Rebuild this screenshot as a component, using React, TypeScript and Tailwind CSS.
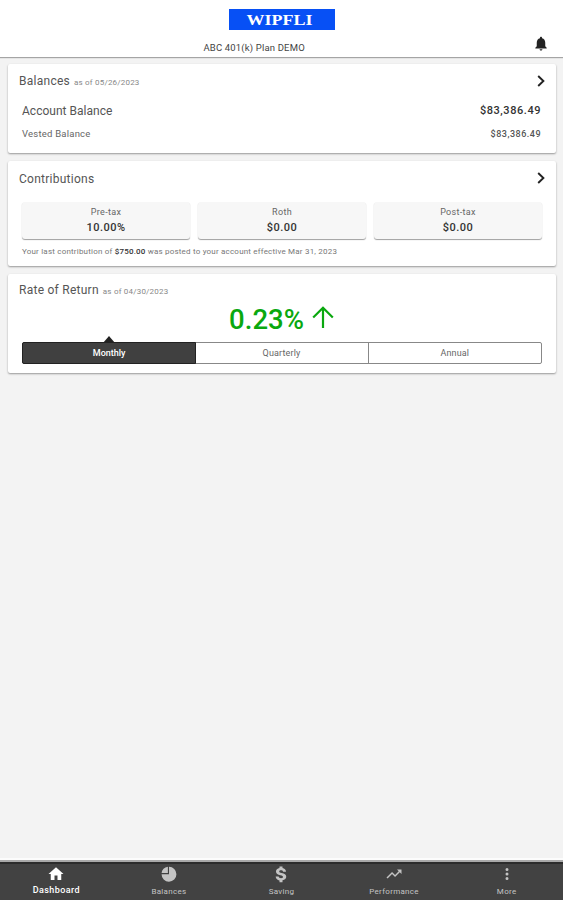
import type { ReactNode } from "react";

const card = "mx-2 mr-[7px] rounded-[2px] bg-white shadow-[0_1px_2px_rgba(0,0,0,0.38)]";

function Chevron() {
  return (
    <svg className="h-3 w-2" viewBox="0 0 8 12" fill="none" stroke="#222" strokeWidth="1.9">
      <path d="M1.2 1 6.4 6 1.2 11" />
    </svg>
  );
}

function Title({ text, date, arrow }: { text: string; date?: string; arrow?: boolean }) {
  return (
    <div className="flex h-4 items-center justify-between pr-[11px] pl-[11px]">
      <div className="flex items-baseline gap-1 pt-0.5 leading-4 whitespace-nowrap">
        <span className="text-[12px] tracking-[0.26px] text-[#555]">{text}</span>
        {date && <span className="text-[8px] tracking-[0.2px] text-[#888]">{date}</span>}
      </div>
      {arrow && <Chevron />}
    </div>
  );
}

function Tile({ label, value }: { label: string; value: string }) {
  return (
    <div className="flex h-[37px] flex-1 flex-col items-center rounded-[3px] bg-[#f7f7f7] pt-1 shadow-[0_1px_1px_rgba(0,0,0,0.38)]">
      <span className="text-[9px] leading-[12px] tracking-[0.32px] text-[#666]">{label}</span>
      <span className="mt-[3px] text-[11px] leading-[14px] font-medium tracking-[0.45px] text-[#333]">{value}</span>
    </div>
  );
}

function NavItem({ label, active, children }: { label: string; active?: boolean; children: ReactNode }) {
  return (
    <div className={`flex flex-1 flex-col items-center pt-0.5 ${active ? "text-white" : "text-[#c4c4c4]"}`}>
      <svg className="h-[18px] w-[18px]" viewBox="0 0 24 24" fill="currentColor">
        {children}
      </svg>
      <span className={active ? "mt-0.5 text-[9px] leading-[11px] font-medium tracking-[0.4px]" : "mt-[3px] text-[8px] leading-[11px] tracking-[0.3px]"}>
        {label}
      </span>
    </div>
  );
}

export default function App() {
  return (
    <div className="flex h-[900px] w-[563px] flex-col overflow-hidden bg-[#f3f3f3] font-['Roboto',sans-serif]">
      <header className="grid h-[57px] shrink-0 grid-cols-[1fr_auto_1fr] bg-white pt-[9px] shadow-[0_1px_1px_rgba(0,0,0,0.32)]">
        <div />
        <div className="flex w-[160px] flex-col items-center">
          <div className="flex h-[21px] w-[106px] items-center justify-center bg-[#0750f5] font-['Liberation_Serif',serif] text-[15px] leading-5 font-bold text-white">
            <span className="mr-1 inline-block scale-x-[1.2]">WIPFLI</span>
          </div>
          <div className="mt-3 w-full pl-[2px] text-[9.5px] leading-3 tracking-[0.17px] whitespace-nowrap text-[#444]">
            ABC 401(k) Plan DEMO
          </div>
        </div>
        <div className="flex justify-end pt-[26px] pr-[13px]">
          <svg className="h-[17px] w-[18px]" viewBox="0 0 24 24" fill="#222">
            <path d="M12 22c1.1 0 2-.9 2-2h-4c0 1.1.9 2 2 2zm6-6v-5c0-3.07-1.63-5.64-4.5-6.32V4c0-.83-.67-1.5-1.5-1.5s-1.5.67-1.5 1.5v.68C7.64 5.36 6 7.92 6 11v5l-2 2v1h16v-1z" />
          </svg>
        </div>
      </header>

      <main className="flex flex-1 flex-col pt-[7px]">
        <section className={`${card} h-[89px] pt-[9px]`}>
          <Title text="Balances" date="as of 05/26/2023" arrow />
          <div className="mt-[14px] flex justify-between pr-[15px] pl-[14px] text-[12px] leading-4">
            <span className="tracking-[0.02px] text-[#555]">Account Balance</span>
            <span className="text-[11px] font-medium tracking-[0.55px] text-[#333]">$83,386.49</span>
          </div>
          <div className="mt-[9px] flex justify-between pr-[15px] pl-[14px] text-[9.5px] leading-3">
            <span className="tracking-[0.22px] text-[#666]">Vested Balance</span>
            <span className="text-[9px] font-medium tracking-[0.5px] text-[#555]">$83,386.49</span>
          </div>
        </section>

        <section className={`${card} mt-2 h-[105px] pt-[9px]`}>
          <Title text="Contributions" arrow />
          <div className="mt-4 flex gap-2 pr-[14px] pl-[14px]">
            <Tile label="Pre-tax" value="10.00%" />
            <Tile label="Roth" value="$0.00" />
            <Tile label="Post-tax" value="$0.00" />
          </div>
          <p className="mt-[7px] pl-[14px] text-[8px] leading-[11px] tracking-[0.2px] text-[#777]">
            Your last contribution of <b className="font-medium text-[#333]">$750.00</b> was posted to your account effective Mar 31, 2023
          </p>
        </section>

        <section className={`${card} mt-2 h-[99px] pt-[8px]`}>
          <Title text="Rate of Return" date="as of 04/30/2023" />
          <div className="mt-[7px] flex h-[29px] items-center justify-center gap-[8px] pr-px text-[#0aa80f]">
            <span className="text-[27.5px] leading-7 font-medium">0.23%</span>
            <svg className="mb-1 h-[23px] w-[22px]" viewBox="0 0 22 23" fill="none" stroke="currentColor" strokeWidth="2.2">
              <path d="M11 22V2M1.2 11.5 11 1.8l9.8 9.7" />
            </svg>
          </div>
          <div className="relative mx-[14px] mt-2 flex h-[22px] rounded-[2px] border border-[#888] text-center text-[9px] leading-5 text-[#666]">
            <svg className="absolute -top-[7px] left-[80px] h-[7px] w-3" viewBox="0 0 12 7" fill="#222">
              <path d="M0 7 6 0l6 7Z" />
            </svg>
            <div className="-m-px flex-1 rounded-l-[2px] border border-[#222] bg-[#404040] font-medium text-white">Monthly</div>
            <div className="flex-1 tracking-[0.15px]">Quarterly</div>
            <div className="flex-1 border-l border-[#888] tracking-[0.15px]">Annual</div>
          </div>
        </section>
      </main>

      <nav className="flex h-[42px] shrink-0 border-t-2 border-[#fcfcfc] bg-[#424242] shadow-[inset_0_2px_0_#aaa,inset_0_4px_0_#2c2c2c]">
        <div className="flex flex-1 pt-[3px]">
          <NavItem label="Dashboard" active>
            <path d="M10 20v-6h4v6h5v-8h3L12 3 2 12h3v8z" />
          </NavItem>
          <NavItem label="Balances">
            <path d="M10.5 2.4a9.8 9.8 0 0 0-8.4 8.3h8.4zm1.5 0v9.8H2.1A9.9 9.9 0 1 0 12 2.4" />
          </NavItem>
          <NavItem label="Saving">
            <path d="M10 2h4v2c2.8.5 4.5 2 4.7 5h-4c-.2-1.4-1.1-1.9-2.7-1.9-1.5 0-2.4.5-2.4 1.5 0 1.1 1 1.5 3.4 2.1 3.6.9 6 2.1 6 5.1 0 2.5-1.9 4-5 4.6V23h-4v-2.5c-3-.6-5-2.3-5.1-5.2h4c.2 1.6 1.3 2.2 3.2 2.2 1.8 0 2.6-.7 2.6-1.6 0-1.2-1-1.6-3.6-2.3-3.3-.8-5.8-1.9-5.8-4.9 0-2.4 1.8-4 4.7-4.6z" />
          </NavItem>
          <NavItem label="Performance">
            <path d="m16 6 2.29 2.29-4.88 4.88-4-4L2 16.59 3.41 18l6-6 4 4 6.3-6.29L22 12V6z" />
          </NavItem>
          <NavItem label="More">
            <path d="M12 8a2 2 0 1 0 0-4 2 2 0 0 0 0 4m0 2a2 2 0 1 0 0 4 2 2 0 0 0 0-4m0 6a2 2 0 1 0 0 4 2 2 0 0 0 0-4" />
          </NavItem>
        </div>
      </nav>
    </div>
  );
}
